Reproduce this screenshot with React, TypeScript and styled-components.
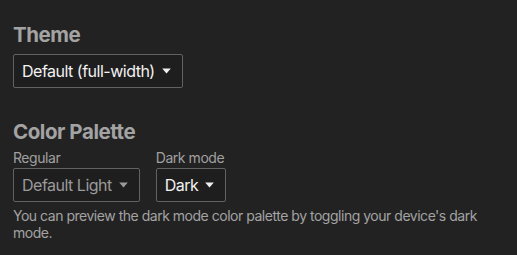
import React from "react";
import styled, { createGlobalStyle } from "styled-components";

const Global = createGlobalStyle`
  html, body { margin: 0; padding: 0; background: #222222; overflow: hidden; }
  body { font-family: Inter, "Noto Sans", sans-serif; -webkit-font-smoothing: antialiased; }
`;

const Page = styled.div`
  padding: 23px 13px 0 13px;
  display: flex;
  flex-direction: column;
  gap: 32px;
`;

const Section = styled.section`
  display: flex;
  flex-direction: column;
`;

const Heading = styled.h2<{ $tight?: boolean }>`
  margin: 0 0 ${(p) => (p.$tight ? 5 : 7)}px 0;
  font-size: 20.5px;
  line-height: 24px;
  font-weight: 700;
  letter-spacing: -0.45px;
  color: #a3a3a3;
`;

const Row = styled.div`
  display: flex;
  gap: 16px;
`;

const Field = styled.div`
  display: flex;
  flex-direction: column;
`;

const Label = styled.label`
  font-size: 14px;
  line-height: 17px;
  letter-spacing: -0.45px;
  color: #a0a0a0;
  margin-bottom: 2px;
`;

const Select = styled.button<{ $muted?: boolean }>`
  display: inline-flex;
  align-items: center;
  gap: 7px;
  height: 34px;
  box-sizing: border-box;
  padding: 0 11px 0 8px;
  background: #1e1e1e;
  border: 1px solid #626262;
  border-radius: 2px;
  font-family: inherit;
  font-size: 16px;
  letter-spacing: -0.5px;
  color: ${(p) => (p.$muted ? "#9a9a9a" : "#f2f2f2")};
  cursor: pointer;
`;

const Caret = styled.svg`
  width: 9px;
  height: 6px;
  flex: none;
`;

const Help = styled.p`
  margin: 5px 0 0 0;
  font-size: 14px;
  line-height: 17px;
  letter-spacing: -0.48px;
  color: #a3a3a3;
  max-width: 480px;
`;

function Arrow({ color }: { color: string }) {
  return (
    <Caret viewBox="0 0 9 6">
      <path d="M0.2 0.5 L8.8 0.5 L4.5 5.5 Z" fill={color} />
    </Caret>
  );
}

export default function App() {
  return (
    <>
      <Global />
      <Page>
        <Section>
          <Heading>Theme</Heading>
          <Row>
            <Select>
              Default (full-width)
              <Arrow color="#f0f0f0" />
            </Select>
          </Row>
        </Section>
        <Section>
          <Heading $tight>Color Palette</Heading>
          <Row>
            <Field>
              <Label>Regular</Label>
              <Select $muted>
                Default Light
                <Arrow color="#9a9a9a" />
              </Select>
            </Field>
            <Field>
              <Label>Dark mode</Label>
              <Select>
                Dark
                <Arrow color="#f0f0f0" />
              </Select>
            </Field>
          </Row>
          <Help>
            You can preview the dark mode color palette by toggling your device's dark mode.
          </Help>
        </Section>
      </Page>
    </>
  );
}
